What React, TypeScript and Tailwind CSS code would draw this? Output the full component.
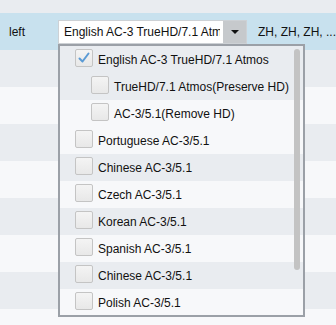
import React from "react";

type Item = { label: string; checked?: boolean; sub?: boolean; gray: boolean };

const items: Item[] = [
  { label: "English AC-3 TrueHD/7.1 Atmos", checked: true, gray: true },
  { label: "TrueHD/7.1 Atmos(Preserve HD)", sub: true, gray: true },
  { label: "AC-3/5.1(Remove HD)", sub: true, gray: false },
  { label: "Portuguese AC-3/5.1", gray: false },
  { label: "Chinese AC-3/5.1", gray: true },
  { label: "Czech AC-3/5.1", gray: false },
  { label: "Korean AC-3/5.1", gray: true },
  { label: "Spanish AC-3/5.1", gray: false },
  { label: "Chinese AC-3/5.1", gray: true },
  { label: "Polish AC-3/5.1", gray: false },
];

function Checkbox({ checked }: { checked?: boolean }) {
  return (
    <div className="w-[18px] h-[18px] shrink-0 rounded-[2px] border border-[#c4c4c4] bg-gradient-to-b from-[#f4f4f4] to-[#e8e8e8] flex items-center justify-center">
      {checked && (
        <svg width="14" height="14" viewBox="0 0 14 14">
          <path d="M2.5 7.5 L5.5 10.5 L11.5 2.5" fill="none" stroke="#5b9bd5" strokeWidth="2" strokeLinecap="round" strokeLinejoin="round" />
        </svg>
      )}
    </div>
  );
}

export default function App() {
  return (
    <div
      className="relative w-[336px] h-[325px] overflow-hidden text-[12px] text-[#111]"
      style={{ fontFamily: "'Liberation Sans', Arial, sans-serif" }}
    >
      <div className="flex flex-col">
        <div className="h-[13px] bg-[#e9ecf0]" />
        <div className="h-[37px] bg-[#c8e1ee] flex items-center">
          <div className="w-[58px] pl-[9px] shrink-0">left</div>
          <div className="w-[189px] h-[24px] shrink-0 border border-[#cdd1d5] bg-white flex">
            <div className="w-[164px] flex items-center">
              <div className="w-[161px] overflow-hidden whitespace-nowrap pl-[5px] leading-[22px]">
                English AC-3 TrueHD/7.1 Atmos
              </div>
            </div>
            <div className="flex-1 h-full bg-[#c6c9cc] flex items-center justify-center">
              <svg width="8" height="4" viewBox="0 0 8 4">
                <path d="M0 0 H8 L4 4 Z" fill="#111" />
              </svg>
            </div>
          </div>
          <div className="ml-[11px] whitespace-nowrap">ZH, ZH, ZH, ...</div>
        </div>
        <div className="h-[37px] bg-[#e9ecf0]" />
        <div className="h-[37px] bg-[#f7f8fa]" />
        <div className="h-[37px] bg-[#e9ecf0]" />
        <div className="h-[37px] bg-[#f7f8fa]" />
        <div className="h-[37px] bg-[#e9ecf0]" />
        <div className="h-[37px] bg-[#f7f8fa]" />
        <div className="h-[37px] bg-[#e9ecf0]" />
        <div className="h-[37px] bg-[#f7f8fa]" />
      </div>

      <div className="absolute left-[58px] top-[44px] w-[247px] h-[273px] border-2 border-[#9ba0a7] overflow-hidden bg-[#f7f8fa]">
        <div className="flex flex-col">
          {items.map((it, i) => (
            <div
              key={i}
              className={`flex h-[27px] pt-[3px] shrink-0 ${it.sub ? "pl-[31px]" : "pl-[15px]"} ${
                it.gray ? "bg-[#e9ecf0]" : "bg-[#f7f8fa]"
              }`}
            >
              <Checkbox checked={it.checked} />
              <div className="ml-[5px] pt-[2px] leading-[18px] whitespace-nowrap">{it.label}</div>
            </div>
          ))}
        </div>
        <div className="absolute left-[234px] top-[3px] w-[6px] h-[221px] rounded-[3px] bg-[#c3c3c3]" />
      </div>
    </div>
  );
}
